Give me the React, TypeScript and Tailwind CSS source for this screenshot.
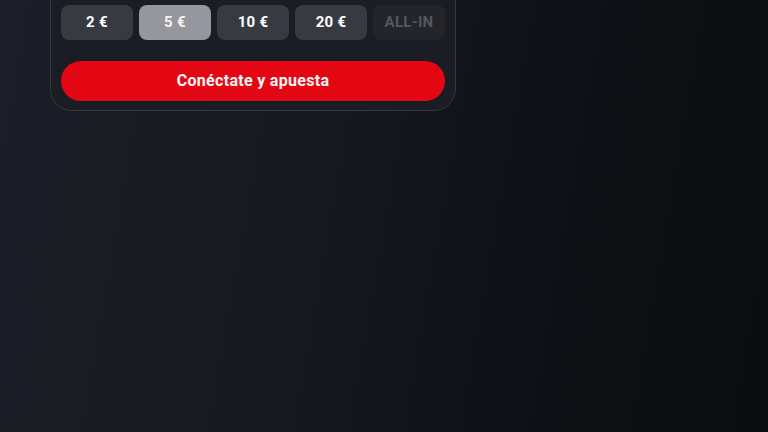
import React from "react";

const amounts = [
  { label: "2 €", cls: "bg-[#383a41] text-white" },
  { label: "5 €", cls: "bg-[#95979c] text-[#f4f4f5]" },
  { label: "10 €", cls: "bg-[#383a41] text-white" },
  { label: "20 €", cls: "bg-[#383a41] text-white" },
  { label: "ALL-IN", cls: "bg-[#23252b] text-[#55575d]" },
];

export default function App() {
  return (
    <div
      className="w-[768px] h-[432px] overflow-hidden bg-[linear-gradient(100deg,#1b1e26_0%,#161920_40%,#0f1116_68%,#0b0c10_100%)]"
      style={{ fontFamily: "Roboto, 'Liberation Sans', sans-serif" }}
    >
      <div className="ml-[50px] mt-[-40px] w-[406px] rounded-[22px] border border-[#34373e] bg-[#1a1d24] px-[10px] pt-[44px] pb-[9px]">
        <div className="flex gap-[6px]">
          {amounts.map((a) => (
            <div
              key={a.label}
              className={`flex h-[35px] w-[72px] items-center justify-center rounded-[8px] text-[15px] font-bold tracking-[0.3px] ${a.cls}`}
            >
              {a.label}
            </div>
          ))}
        </div>
        <button className="mt-[21px] flex h-[40px] w-[384px] items-center justify-center rounded-full bg-[#e30714] text-[16px] font-bold tracking-[0.3px] text-[#fff5f5]">
          Conéctate y apuesta
        </button>
      </div>
    </div>
  );
}
